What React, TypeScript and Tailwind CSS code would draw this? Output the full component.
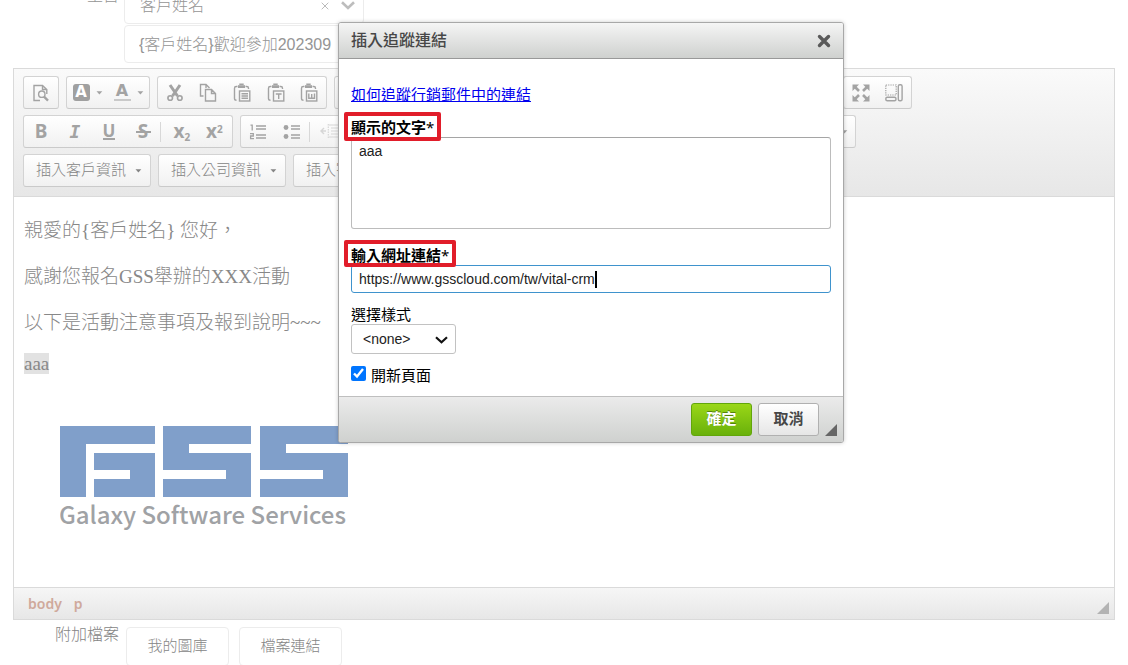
import React from "react";

const sans = "font-['Liberation_Sans','Noto_Sans_CJK_TC',sans-serif]";
const serif = "font-['Liberation_Serif','Noto_Sans_CJK_TC',serif]";

function Svg({ children, size = 20 }: { children: React.ReactNode; size?: number }) {
  return (
    <svg width={size} height={size} viewBox="0 0 20 20" fill="none" stroke="currentColor" strokeWidth="1.4" aria-hidden="true">
      {children}
    </svg>
  );
}

function Caret() {
  return (
    <svg width="7" height="4" viewBox="0 0 7 4" aria-hidden="true" className="shrink-0">
      <path d="M0.5 0.3H6.3L3.4 3.5z" fill="currentColor" />
    </svg>
  );
}

function Group({ className = "", children }: { className?: string; children?: React.ReactNode }) {
  return (
    <div
      className={`flex h-[33px] shrink-0 items-center rounded-[3px] border border-[#d3d3d3] border-b-[#cacaca] bg-linear-to-b from-white to-[#f1f1f1] ${className}`}
    >
      {children}
    </div>
  );
}

function Tool({ label, className = "flex-1", children }: { label: string; className?: string; children: React.ReactNode }) {
  return (
    <button type="button" aria-label={label} className={`flex h-full items-center justify-center ${className}`}>
      {children}
    </button>
  );
}

function Divider() {
  return <span className="h-5 w-px shrink-0 bg-[#d8d8d8]" />;
}

function Clipboard({ children }: { children: React.ReactNode }) {
  return (
    <Svg>
      <path d="M5.5 3.5H4.2Q2.5 3.5 2.5 5.2V15.5Q2.5 17.3 4.5 17.3M13.5 3.5H14.8Q16.5 3.5 16.5 5.2V6" />
      <path d="M6 2.2H13V5H6z" fill="currentColor" stroke="none" />
      <path d="M8 2V1.2H11V2" />
      <rect x="7.5" y="8" width="10.3" height="10" />
      {children}
    </Svg>
  );
}

function Menu({ children }: { children: React.ReactNode }) {
  return (
    <Group className="w-32">
      <button type="button" className="flex h-full flex-1 items-center justify-between pr-2 pl-3 text-[15px] font-light text-[#858585]">
        <span>{children}</span>
        <Caret />
      </button>
    </Group>
  );
}

function Toolbar() {
  return (
    <div className="flex h-32 flex-col gap-1.5 overflow-hidden border-b border-[#dadada] bg-linear-to-b from-[#fafafa] to-[#e7e7e7] px-[9px] pt-[7px] text-[#a3a3a3]">
      <div className="flex gap-[7px]">
        <Group className="w-9">
          <Tool label="預覽">
            <Svg>
              <path d="M9 17.5H3V2.5H11.5L15.8 6.5V11M11.5 2.5V6.5H15.8" />
              <circle cx="10.8" cy="11.2" r="3.2" />
              <path d="M13 13.7L17 17.6" strokeWidth="2.4" />
            </Svg>
          </Tool>
        </Group>
        <Group className="w-[84px]">
          <Tool label="背景顏色">
            <span className="mr-1.5 flex size-[17px] items-center justify-center rounded-[3px] bg-[#a0a0a0] font-['DejaVu_Sans',sans-serif] text-[15px] leading-none font-bold text-white">
              A
            </span>
            <Caret />
          </Tool>
          <Tool label="文字顏色">
            <span className="mr-1.5 flex h-[17px] w-[17px] items-end justify-center border-b-2 border-[#c9c9c9] font-['DejaVu_Sans',sans-serif] text-[16px] leading-4 font-bold">
              A
            </span>
            <Caret />
          </Tool>
        </Group>
        <Group className="w-[170px]">
          <Tool label="剪下">
            <Svg>
              <path d="M5 2L12.5 13M15 2L7.5 13" strokeWidth="3" />
              <circle cx="5.2" cy="15" r="2.3" strokeWidth="1.6" />
              <circle cx="14.8" cy="15" r="2.3" strokeWidth="1.6" />
            </Svg>
          </Tool>
          <Tool label="複製">
            <Svg>
              <path d="M5.5 13H2.5V1.5H8L11.5 5M8 1.5V5" />
              <path d="M7.5 6.5H13.5L17.5 10.5V18H7.5zM13.5 6.5V10.5H17.5" />
            </Svg>
          </Tool>
          <Tool label="貼上">
            <Clipboard>
              <path d="M9.5 10.7H16M9.5 13H16M9.5 15.3H16" />
            </Clipboard>
          </Tool>
          <Tool label="貼成純文字">
            <Clipboard>
              <path d="M9.8 11H15.6M12.7 11V16" />
            </Clipboard>
          </Tool>
          <Tool label="自 Word 貼上">
            <Clipboard>
              <path d="M9.8 10.5V15.3H15.5V10.5M12.7 11V15" />
            </Clipboard>
          </Tool>
        </Group>
        <Group className="w-[502px]" />
        <Group className="w-[69px]">
          <Tool label="最大化">
            <Svg>
              <path d="M4 4L8 8M16 4L12 8M4 16L8 12M16 16L12 12" strokeWidth="2.6" />
              <path d="M1.5 1.5H8L1.5 8zM18.5 1.5H12L18.5 8zM1.5 18.5H8L1.5 12zM18.5 18.5H12L18.5 12z" fill="currentColor" stroke="none" />
            </Svg>
          </Tool>
          <Tool label="顯示區塊">
            <Svg>
              <path d="M1.8 2H12.2V12H1.8z" strokeDasharray="1.3 1" strokeWidth="1.2" />
              <rect x="14.3" y="1.8" width="3.8" height="16" rx="1.5" />
              <rect x="1.8" y="14.2" width="10.2" height="3.6" rx="1.5" />
            </Svg>
          </Tool>
        </Group>
      </div>

      <div className="flex gap-[7px]">
        <Group className="w-[210px]">
          <Tool label="粗體" className="w-[34px]">
            <span className="font-['Noto_Sans',sans-serif] text-[19px] leading-none font-bold">B</span>
          </Tool>
          <Tool label="斜體" className="w-[34px]">
            <span className="font-['DejaVu_Sans_Mono',monospace] text-[18px] leading-none font-bold italic">I</span>
          </Tool>
          <Tool label="底線" className="w-[34px]">
            <span className="border-b-2 border-current font-['Noto_Sans',sans-serif] text-[17px] leading-[15px] font-bold">U</span>
          </Tool>
          <Tool label="刪除線" className="w-[34px]">
            <span className="relative flex w-[15px] justify-center font-['Noto_Sans',sans-serif] text-[19px] leading-none font-bold">
              S
              <span className="absolute inset-x-0 top-[9px] h-0.5 bg-current" />
            </span>
          </Tool>
          <Divider />
          <Tool label="下標">
            <span className="ml-1.5 font-['Noto_Sans',sans-serif] text-[19px] leading-none font-bold">
              x<sub className="text-[10px]">2</sub>
            </span>
          </Tool>
          <Tool label="上標">
            <span className="font-['Noto_Sans',sans-serif] text-[19px] leading-none font-bold">
              x<sup className="text-[10px]">2</sup>
            </span>
          </Tool>
        </Group>
        <Group className="w-[616px]">
          <Tool label="編號清單" className="w-[34px]">
            <Svg>
              <path d="M8 4H18M8 7H18M8 13H18M8 16H18" />
              <path d="M2.5 3.2H4.2V8.5M2 11.7H5.3V14H2.6V16.6H6" strokeWidth="1.3" />
            </Svg>
          </Tool>
          <Tool label="項目清單" className="w-[34px]">
            <Svg>
              <path d="M9 4H18M9 7H18M9 13H18M9 16H18" />
              <circle cx="4" cy="5.5" r="2.4" fill="currentColor" stroke="none" />
              <circle cx="4" cy="14.5" r="2.4" fill="currentColor" stroke="none" />
            </Svg>
          </Tool>
          <Divider />
          <Tool label="減少縮排" className="w-10 text-[#d6d6d6]">
            <Svg>
              <path d="M9 3H18M11 6H18M11 9H18M11 12H18M9 15H18" strokeWidth="1.2" />
              <path d="M8.3 2V17" strokeWidth="1.2" strokeDasharray="1.5 1" />
              <path d="M1 9H6M4 6L1 9L4 12" />
            </Svg>
          </Tool>
          <span className="mr-[7px] ml-auto">
            <Caret />
          </span>
        </Group>
      </div>

      <div className="flex gap-[7px]">
        <Menu>插入客戶資訊</Menu>
        <Menu>插入公司資訊</Menu>
        <Menu>插入寄件資訊</Menu>
      </div>
    </div>
  );
}

function Logo() {
  return (
    <svg width="292" height="108" viewBox="0 0 292 108" role="img" aria-label="GSS Galaxy Software Services">
      <g fill="#809fca">
        <path d="M0 0H95V18H26V71H0z" />
        <path d="M34 27H95V71H34V53H70V44H34z" />
        <path d="M103 0H191V18H129V27H191V71H103V53H166V44H103z" />
        <path d="M200 0H288V18H226V27H288V71H200V53H263V44H200z" />
      </g>
      <text x="-1" y="98" fontSize="24" fontWeight="500" fill="#a0a2a5" fontFamily="Noto Sans CJK TC, sans-serif">
        Galaxy Software Services
      </text>
    </svg>
  );
}

function Editor() {
  return (
    <section className="mx-[13px] mt-[5px] border border-[#dadada]">
      <Toolbar />
      <div className={`flex h-[390px] flex-col gap-4 px-2.5 pt-[19px] text-[19px] leading-[30px] font-light text-[#888] ${serif}`}>
        <p>親愛的{"{客戶姓名}"} 您好，</p>
        <p>感謝您報名GSS舉辦的XXX活動</p>
        <p>以下是活動注意事項及報到說明~~~</p>
        <p className="leading-5">
          <span className="bg-[#e2e2e2]">aaa</span>
        </p>
        <div className="mt-9 ml-9">
          <Logo />
        </div>
      </div>
      <footer className="flex h-8 items-center justify-between border-t border-[#dadada] bg-linear-to-b from-[#f6f6f6] to-[#e7e7e7] pr-[5px] pl-3.5 font-['Noto_Sans',sans-serif] text-[14px] font-semibold text-[#cfa99c]">
        <span className="flex gap-3">
          <a href="#body">body</a>
          <a href="#p">p</a>
        </span>
        <svg width="12" height="12" viewBox="0 0 12 12" className="mt-2" aria-hidden="true">
          <path d="M12 0V12H0z" fill="#b3b3b3" />
        </svg>
      </footer>
    </section>
  );
}

const fileButton = "mt-[7px] h-[39px] w-[103px] rounded-[4px] border border-[#ececec] bg-white text-[15px] font-light text-[#858585]";
const mark = "pointer-events-none absolute rounded-[2px] border-4 border-[#e11d2a]";
const star = "font-['Noto_Sans',sans-serif] font-normal";

function Dialog() {
  return (
    <div
      role="dialog"
      aria-labelledby="dialog-title"
      className="absolute top-[22px] left-[338px] w-[506px] rounded-[3px] border border-[#a8a8a8] bg-white text-black shadow-[0_0_4px_rgba(0,0,0,0.2)]"
    >
      <header className="flex h-9 items-center justify-between rounded-t-[2px] border-b border-[#999] bg-linear-to-b from-[#f5f5f5] to-[#cfd1cf] px-3">
        <h1 id="dialog-title" className="text-[16px] leading-6 font-medium text-[#474747]">
          插入追蹤連結
        </h1>
        <button type="button" aria-label="關閉">
          <svg width="14" height="14" viewBox="0 0 14 14" aria-hidden="true">
            <path d="M2.5 2.5L11.5 11.5M11.5 2.5L2.5 11.5" stroke="#5a5a5a" strokeWidth="3.4" strokeLinecap="round" />
          </svg>
        </button>
      </header>

      <div className="flex h-[337px] flex-col items-start px-3 pt-[25px] text-[15px] leading-[22px]">
        <a href="#help" className="text-[#0000ee] underline">
          如何追蹤行銷郵件中的連結
        </a>
        <label htmlFor="display-text" className="relative mt-2.5 h-[21px] font-bold">
          顯示的文字<span className={star}>*</span>
          <span className={`${mark} -inset-x-[7px] -top-1 h-[29px]`} />
        </label>
        <textarea
          id="display-text"
          defaultValue="aaa"
          className="h-[92px] w-full resize-none rounded-[3px] border border-[#bcbcbc] border-t-[#a5a5a5] px-[7px] pt-0.5 text-[14px] leading-[22px] text-[#222] outline-none"
        />
        <label htmlFor="url" className="relative mt-[15px] h-[21px] font-bold">
          輸入網址連結<span className={star}>*</span>
          <span className={`${mark} -inset-x-[7px] -top-1 h-[27px]`} />
        </label>
        <div className="flex h-7 w-full items-center rounded-[3px] border border-[#3f93cd] px-[7px]">
          <input
            id="url"
            defaultValue="https://www.gsscloud.com/tw/vital-crm"
            className="field-sizing-content text-[14px] text-[#222] outline-none"
          />
          <span className="h-[17px] w-0.5 bg-black" />
        </div>
        <label htmlFor="style" className="mt-[11px] h-5">
          選擇樣式
        </label>
        <div className="relative">
          <select id="style" className="h-[30px] w-[105px] appearance-none rounded-[3px] border border-[#c2c2c2] bg-white pl-[11px] text-[14px] text-[#222]">
            <option>&lt;none&gt;</option>
          </select>
          <svg width="13" height="8" viewBox="0 0 13 8" className="pointer-events-none absolute top-3 right-2" aria-hidden="true">
            <path d="M1 1.2L6.5 6.2L12 1.2" fill="none" stroke="#111" strokeWidth="2.2" />
          </svg>
        </div>
        <label className="mt-[11px] flex items-start gap-[5px]">
          <input type="checkbox" defaultChecked className="mt-px size-[15px] accent-[#0075ff]" />
          <span>開新頁面</span>
        </label>
      </div>

      <footer className="flex h-[46px] items-center justify-end rounded-b-[2px] border-t border-[#bfbfbf] bg-linear-to-b from-[#ebebeb] to-[#cfd1cf] pr-1.5 text-[15px] font-bold">
        <button
          type="button"
          className="mr-1.5 h-[33px] w-[61px] rounded-[3px] border border-[#62a60a] bg-linear-to-b from-[#9ad717] to-[#69b10b] text-white [text-shadow:0_-1px_0_#55830c]"
        >
          確定
        </button>
        <button
          type="button"
          className="mr-1.5 h-[33px] w-[61px] rounded-[3px] border border-[#b0b0b0] bg-linear-to-b from-white to-[#e6e6e6] text-[#474747]"
        >
          取消
        </button>
        <svg width="12" height="12" viewBox="0 0 12 12" className="mt-5" aria-hidden="true">
          <path d="M12 0V12H0z" fill="#666" />
        </svg>
      </footer>
    </div>
  );
}

export default function App() {
  return (
    <main className={`relative h-screen overflow-hidden bg-white ${sans}`}>
      <div className="-mt-[13px] flex flex-col gap-px text-[16px] font-light text-[#959595]">
        <div className="flex h-[37px] items-start gap-[5px]">
          <label htmlFor="field" className="w-[119px] shrink-0 text-right leading-[18px]">
            主旨
          </label>
          <div className="flex h-full w-60 items-center rounded-[4px] border border-[#ececec] pr-2 pl-[15px]">
            <input id="field" defaultValue="客戶姓名" className="w-0 flex-1 outline-none" />
            <svg width="8" height="8" viewBox="0 0 8 8" className="mr-3" aria-hidden="true">
              <path d="M0.7 0.7L7.3 7.3M7.3 0.7L0.7 7.3" stroke="#bbb" strokeWidth="1" />
            </svg>
            <svg width="14" height="9" viewBox="0 0 14 9" aria-hidden="true">
              <path d="M1 1.3L7 7L13 1.3" fill="none" stroke="#bdbdbd" strokeWidth="2.6" />
            </svg>
          </div>
        </div>
        <div className="flex h-[38px] pl-[124px]">
          <input
            aria-label="主旨內容"
            defaultValue="{客戶姓名}歡迎參加202309"
            className="w-full max-w-[600px] rounded-[4px] border border-[#ececec] px-3.5 pt-0.5 outline-none"
          />
        </div>
      </div>
      <Editor />
      <div className="flex items-start">
        <span className="mt-[5px] w-[119px] text-right text-[16px] leading-5 font-light text-[#858585]">附加檔案</span>
        <button type="button" className={`ml-[7px] ${fileButton}`}>
          我的圖庫
        </button>
        <button type="button" className={`ml-2.5 ${fileButton}`}>
          檔案連結
        </button>
      </div>
      <Dialog />
    </main>
  );
}
